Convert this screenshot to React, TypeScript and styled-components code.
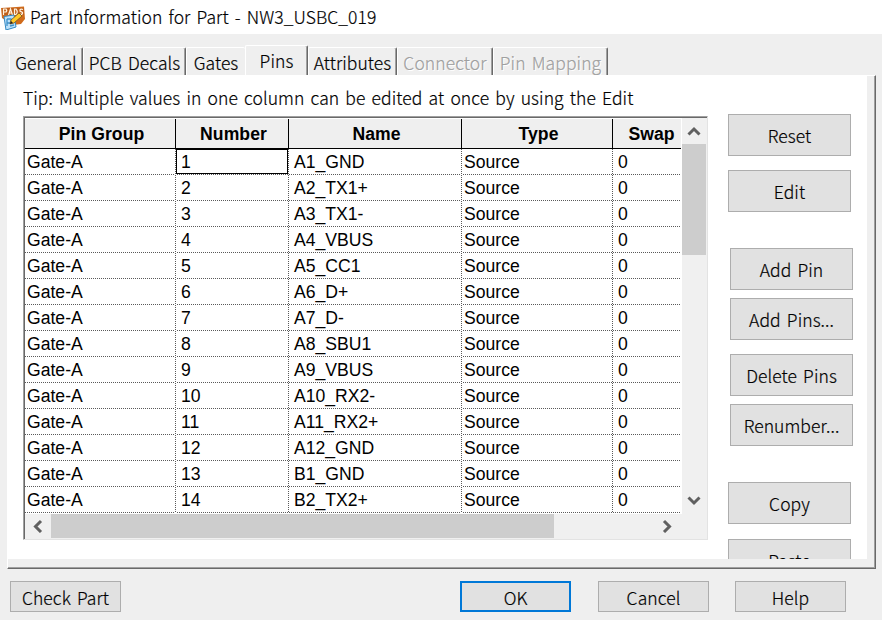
import React from "react";
import styled, { createGlobalStyle } from "styled-components";

const Global = createGlobalStyle`
  * { box-sizing: border-box; }
  body { margin: 0; background: #f0f0f0; overflow: hidden; }
`;
const uiFont = `"Noto Sans CJK KR", "Open Sans", sans-serif`;

const Dialog = styled.div`
  width: 882px; height: 620px; background: #efefef; color: #000;
  display: flex; flex-direction: column; overflow: hidden;
  font: 300 17.5px/27px ${uiFont};
`;
const Label = styled.span<{ $ls?: number; $ws?: number }>`
  white-space: pre;
  letter-spacing: ${p => p.$ls ?? 0.07}px;
  word-spacing: ${p => p.$ws ?? 2.2}px;
  -webkit-text-stroke: 0.2px currentColor;
`;
const TitleBar = styled.header`
  height: 34px; background: #fff; display: flex; align-items: center; gap: 4px; padding-left: 1px;
  flex: none; padding-bottom: 1px;
`;
const TabBar = styled.nav`
  height: 41px; flex: none; display: flex; align-items: flex-end; padding-left: 9px;
`;
const Tab = styled.div<{ $w: number; $active?: boolean; $disabled?: boolean; $open?: boolean }>`
  width: ${p => p.$w}px; height: ${p => (p.$active ? 30 : 28)}px; flex: none;
  border-top: 1px solid #fff; border-left: 1px solid #fff;
  border-right: ${p => (p.$open ? "0" : "1px solid #696969")};
  box-shadow: ${p => (p.$open ? "none" : "inset -1px 0 #a0a0a0")};
  border-radius: 2px 2px 0 0;
  display: flex; align-items: flex-start; justify-content: center; padding-top: 1px;
  color: ${p => (p.$disabled ? "#a0a0a0" : "#000")};
  text-shadow: ${p => (p.$disabled ? "1px 1px 0 #fff" : "none")};
`;
const TabPanel = styled.section`
  width: 869px; height: 494px; flex: none; margin-left: 7px; padding: 0 8px 9px 0;
  border: solid; border-width: 1px 1px 1px 1px; border-color: #fff #696969 #696969 #fff;
  box-shadow: inset -1px -1px #a0a0a0;
`;
const Page = styled.div`
  height: 483px; background: #fff; overflow: hidden; display: flex; padding-left: 15px;
`;
const Main = styled.div`width: 685px; flex: none;`;
const Tip = styled.div`height: 40px; padding-top: 8px;`;
const Grid = styled.div`
  width: 685px; height: 424px; display: grid; padding: 1px 0 0 1px;
  grid-template-columns: 657px 25px; grid-template-rows: 396px 25px;
  border: 1px solid; border-color: #a0a0a0 #e3e3e3 #e3e3e3 #a0a0a0;
  box-shadow: inset 1px 1px #696969;
  background: #f0f0f0;
`;
const Cells = styled.div`
  background: #fff; font: 400 17.6px/25px "Liberation Sans", Arial, sans-serif;
  border-right: 1px solid #fff;
`;
const columns = "150px 1px 112px 1px 172px 1px 150px 1px 68px";
const HeadRow = styled.div`
  display: grid; grid-template-columns: 151px 113px 173px 151px 68px; height: 31px; background: #efefef;
  border-bottom: 1px solid #000; font-weight: 700; line-height: 30px; text-align: center; overflow: hidden;
  border-top: 1px solid #fff;
`;
const HeadCell = styled.div<{ $last?: boolean }>`
  border-right: ${p => (p.$last ? "0" : "1px solid #000")};
  padding-left: ${p => (p.$last ? 9 : 3)}px;
  white-space: nowrap; letter-spacing: 0.05px;
`;
const Row = styled.div`
  display: grid; grid-template-columns: ${columns}; height: 26px;
  background: repeating-linear-gradient(90deg, #5a5a5a 0 1px, #fff 1px 2px) 0 100% / 100% 1px no-repeat;
`;
const Divider = styled.div`
  background: repeating-linear-gradient(180deg, #5a5a5a 0 1px, #fff 1px 2px);
`;
const Cell = styled.div<{ $pad: number; $focus?: boolean }>`
  height: 25px; padding-left: ${p => p.$pad - (p.$focus ? 1 : 0)}px; white-space: nowrap;
  line-height: ${p => (p.$focus ? 24 : 26)}px;
  border: ${p => (p.$focus ? "1px solid #000" : "0")};
`;
const VBar = styled.div`display: flex; flex-direction: column; justify-content: space-between; width: 24px;`;
const HBar = styled.div`
  grid-column: 1 / 3; display: flex; height: 24px; width: 655px; justify-content: space-between;
`;
const ArrowBox = styled.div`
  width: 26px; height: 24px; display: flex; align-items: center; justify-content: center; flex: none;
  svg { display: block; fill: none; stroke: #606060; stroke-width: 3; }
`;
const VArrow = styled(ArrowBox)`width: 24px; height: 26px;`;
const VThumb = styled.div`height: 111px; background: #cdcdcd; margin-bottom: auto;`;
const HThumb = styled.div`width: 503px; background: #cdcdcd; margin-right: auto;`;
const Side = styled.aside`
  width: 145px; padding: 38px 0 0 20px; display: flex; flex-direction: column; flex: none;
`;
const Button = styled.button<{ $gap?: number; $shift?: boolean }>`
  width: 123px; height: 42px; flex: none; margin: 0 0 ${p => p.$gap ?? 0}px ${p => (p.$shift ? 2 : 0)}px;
  border: 1px solid #adadad; background: #e1e1e1; color: #000; padding: 1px 0 0; font: inherit;
`;
const Footer = styled.footer`
  display: flex; padding: 12px 0 0 10px; height: 51px; flex: none;
`;
const FootButton = styled(Button)<{ $left?: number; $primary?: boolean }>`
  width: 111px; height: 31px; margin: 0 0 0 ${p => p.$left ?? 0}px;
  border: ${p => (p.$primary ? "2px solid #0078d7" : "1px solid #adadad")};
  padding: 2px 0 0; line-height: 25px;
`;

const AppIcon = () => (
  <svg width="25" height="26" viewBox="0 0 25 26">
    <path d="M0 4 23 2.500 24 15 20 20 12 21 1 14Z" fill="#d06b1b" />
    <path d="M1 4H23V11H1Z" fill="#bf5f1a" />
    <g stroke="#fff3df" strokeWidth="1.200" fill="none">
      <path d="M2.500 11V5H5Q6.500 6.500 5 8H2.500M7.500 11 9.500 5 11.500 11M8 9H11M13.500 5V10.500H15Q17.500 8 15 5ZM22 5.500Q18.500 4.500 19 7L21.500 8.500Q22 11 18.500 10" />
    </g>
    <path d="M3 12.500 13 11 15 23 5 26Z" fill="#bce1fa" stroke="#3288c3" />
    <path d="M6 15V22M6 15H10V19H6M9 22 13 21" stroke="#3e91cb" strokeWidth="1.300" fill="none" />
    <path d="M9 20 10 16 18 9 21 12 13 19Z" fill="#ffc926" stroke="#755020" strokeWidth=".8" />
    <path d="M9 20 10 17 12 19Z" fill="#222" />
  </svg>
);
const Chevron = ({ d }: { d: string }) => (
  <svg width="14" height="14" viewBox="0 0 14 14"><path d={d} /></svg>
);

type TabInfo = { name: string; w: number; active?: boolean; disabled?: boolean; open?: boolean };
const tabs: TabInfo[] = [
  { name: "General", w: 74 }, { name: "PCB Decals", w: 103 }, { name: "Gates", w: 59, open: true },
  { name: "Pins", w: 63, active: true }, { name: "Attributes", w: 89 },
  { name: "Connector", w: 96, disabled: true }, { name: "Pin Mapping", w: 115, disabled: true },
];
const names = ["A1_GND", "A2_TX1+", "A3_TX1-", "A4_VBUS", "A5_CC1", "A6_D+", "A7_D-", "A8_SBU1", "A9_VBUS", "A10_RX2-", "A11_RX2+", "A12_GND", "B1_GND", "B2_TX2+"];
const actions = [
  { name: "Reset", gap: 14 }, { name: "Edit", gap: 36 },
  { name: "Add Pin", gap: 8, shift: true }, { name: "Add Pins...", gap: 14, shift: true },
  { name: "Delete Pins", gap: 8, shift: true }, { name: "Renumber...", gap: 36, shift: true },
  { name: "Copy", gap: 15 }, { name: "Paste" },
];

export default function App() {
  return (
    <Dialog>
      <Global />
      <TitleBar><AppIcon /><Label>Part Information for Part - NW3_USBC_019</Label></TitleBar>
      <TabBar>
        {tabs.map(t => (
          <Tab key={t.name} $w={t.w} $active={t.active} $disabled={t.disabled} $open={t.open}><Label>{t.name}</Label></Tab>
        ))}
      </TabBar>
      <TabPanel>
        <Page>
          <Main>
            <Tip><Label>Tip: Multiple values in one column can be edited at once by using the Edit</Label></Tip>
            <Grid>
              <Cells>
                <HeadRow>
                  <HeadCell>Pin Group</HeadCell><HeadCell>Number</HeadCell><HeadCell>Name</HeadCell>
                  <HeadCell>Type</HeadCell><HeadCell $last>Swap</HeadCell>
                </HeadRow>
                {names.map((n, i) => (
                  <Row key={n}>
                    <Cell $pad={2}>Gate-A</Cell><Divider />
                    <Cell $pad={5} $focus={i === 0}>{i + 1}</Cell><Divider />
                    <Cell $pad={5}>{n}</Cell><Divider />
                    <Cell $pad={2}>Source</Cell><Divider />
                    <Cell $pad={5}>0</Cell>
                  </Row>
                ))}
              </Cells>
              <VBar>
                <VArrow><Chevron d="M1.500 10.500 7 5 12.500 10.500" /></VArrow>
                <VThumb />
                <VArrow><Chevron d="M1.500 3.500 7 9 12.500 3.500" /></VArrow>
              </VBar>
              <HBar>
                <ArrowBox><Chevron d="M10 2 4.500 7.500 10 13" /></ArrowBox>
                <HThumb />
                <ArrowBox><Chevron d="M4 2 9.500 7.500 4 13" /></ArrowBox>
              </HBar>
            </Grid>
          </Main>
          <Side>
            {actions.map(a => (
              <Button key={a.name} $gap={a.gap} $shift={a.shift}><Label>{a.name}</Label></Button>
            ))}
          </Side>
        </Page>
      </TabPanel>
      <Footer>
        <FootButton><Label>Check Part</Label></FootButton>
        <FootButton $left={339} $primary><Label>OK</Label></FootButton>
        <FootButton $left={27}><Label>Cancel</Label></FootButton>
        <FootButton $left={26}><Label>Help</Label></FootButton>
      </Footer>
    </Dialog>
  );
}
